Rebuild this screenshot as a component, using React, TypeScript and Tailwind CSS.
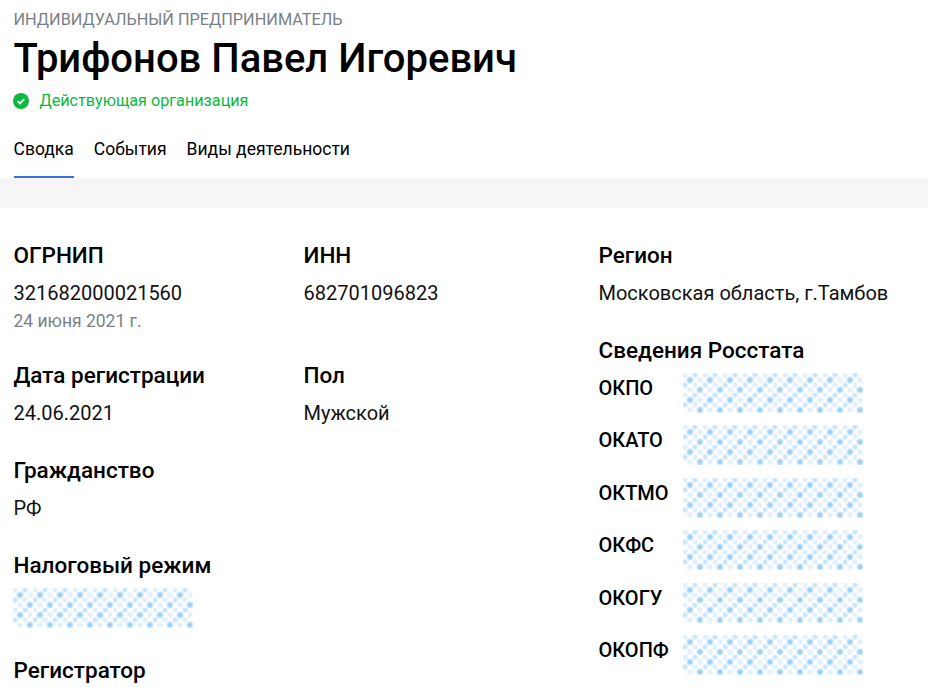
import React from 'react';

const font = { fontFamily: 'Roboto, sans-serif' };

// blurred placeholder used for the hidden values
const Blur: React.FC<{ id: string; className?: string }> = ({ id, className }) => (
  <svg width="180" height="40" className={`block shrink-0 ${className ?? ''}`}>
    <defs>
      <radialGradient id={`${id}-a`}>
        <stop offset="0.35" stopColor="#9dd0f6" />
        <stop offset="1" stopColor="#9dd0f6" stopOpacity="0" />
      </radialGradient>
      <radialGradient id={`${id}-b`}>
        <stop offset="0.35" stopColor="#c6e3f9" />
        <stop offset="1" stopColor="#c6e3f9" stopOpacity="0" />
      </radialGradient>
      <radialGradient id={`${id}-c`}>
        <stop offset="0.35" stopColor="#e0effc" />
        <stop offset="1" stopColor="#e0effc" stopOpacity="0" />
      </radialGradient>
      <pattern id={id} width="20" height="20" patternUnits="userSpaceOnUse">
        <rect width="20" height="20" fill="#fcfdff" />
        <circle cx="2" cy="2" r="3.6" fill={`url(#${id}-c)`} />
        <circle cx="12" cy="2" r="3.6" fill={`url(#${id}-b)`} />
        <circle cx="7" cy="7" r="4.2" fill={`url(#${id}-a)`} />
        <circle cx="17" cy="7" r="3.6" fill={`url(#${id}-c)`} />
        <circle cx="2" cy="12" r="3.6" fill={`url(#${id}-b)`} />
        <circle cx="12" cy="12" r="3.6" fill={`url(#${id}-c)`} />
        <circle cx="7" cy="17" r="3.6" fill={`url(#${id}-c)`} />
        <circle cx="17" cy="17" r="4.2" fill={`url(#${id}-a)`} />
      </pattern>
    </defs>
    <rect width="180" height="40" fill={`url(#${id})`} />
  </svg>
);

const Field: React.FC<{ title: string; children?: React.ReactNode; className?: string }> = ({ title, children, className }) => (
  <div className={className}>
    <h3 className="text-[22.5px] leading-[28px] font-medium text-black">{title}</h3>
    {children}
  </div>
);

const Value: React.FC<{ children: React.ReactNode }> = ({ children }) => (
  <p className="mt-[12px] text-[20px] leading-[24px] text-[#111]">{children}</p>
);

const codes = ['ОКПО', 'ОКАТО', 'ОКТМО', 'ОКФС', 'ОКОГУ', 'ОКОПФ'];

export default function App() {
  return (
    <div className="w-[928px] h-[693px] overflow-hidden bg-white" style={font}>
      <div className="pl-[13.5px] pt-[10px]">
        <p className="text-[16.25px] leading-[20px] text-[#7a7f87]">ИНДИВИДУАЛЬНЫЙ ПРЕДПРИНИМАТЕЛЬ</p>
        <h1 className="mt-[5px] text-[40px] leading-[48px] font-medium text-black">Трифонов Павел Игоревич</h1>
        <div className="mt-[8px] -ml-[0.5px] flex items-center gap-[10.5px]">
          <svg width="16" height="16" viewBox="0 0 16 16">
            <circle cx="8" cy="8" r="8" fill="#0db83f" />
            <path d="M4.6 8.2l2.3 2.3 4.4-4.4" fill="none" stroke="#fff" strokeWidth="1.8" />
          </svg>
          <span className="text-[16.2px] leading-[20px] text-[#0db83f]">Действующая организация</span>
        </div>
        <div className="mt-[27px] flex gap-[20px] text-[17.5px] leading-[22px] text-black">
          <div className="pb-[16px] border-b-2 border-[#3b6fe0]">Сводка</div>
          <div>События</div>
          <div>Виды деятельности</div>
        </div>
      </div>
      <div className="h-[30px] bg-[#f6f6f6]" />
      <div className="flex pl-[13.5px] pt-[33px]">
        <div className="w-[290px]">
          <Field title="ОГРНИП">
            <Value>321682000021560</Value>
            <p className="mt-[6px] text-[17.5px] leading-[20px] text-[#7a7f87]">24 июня 2021 г.</p>
          </Field>
          <Field title="Дата регистрации" className="mt-[30px]">
            <Value>24.06.2021</Value>
          </Field>
          <Field title="Гражданство" className="mt-[31px]">
            <Value>РФ</Value>
          </Field>
          <Field title="Налоговый режим" className="mt-[31px]">
            <Blur id="tax" className="mt-[9px] -ml-[0.5px]" />
          </Field>
          <Field title="Регистратор" className="mt-[28px]" />
        </div>
        <div className="w-[295px]">
          <Field title="ИНН">
            <Value>682701096823</Value>
          </Field>
          <Field title="Пол" className="mt-[56px]">
            <Value>Мужской</Value>
          </Field>
        </div>
        <div>
          <Field title="Регион">
            <Value>Московская область, г.Тамбов</Value>
          </Field>
          <Field title="Сведения Росстата" className="mt-[31px]">
            <div className="mt-[9px] flex flex-col gap-[12.4px]">
              {codes.map(c => (
                <div key={c} className="flex">
                  <span className="w-[84.5px] pt-[3px] text-[20px] leading-[24px] font-medium text-black">{c}</span>
                  <Blur id={c} />
                </div>
              ))}
            </div>
          </Field>
        </div>
      </div>
    </div>
  );
}
